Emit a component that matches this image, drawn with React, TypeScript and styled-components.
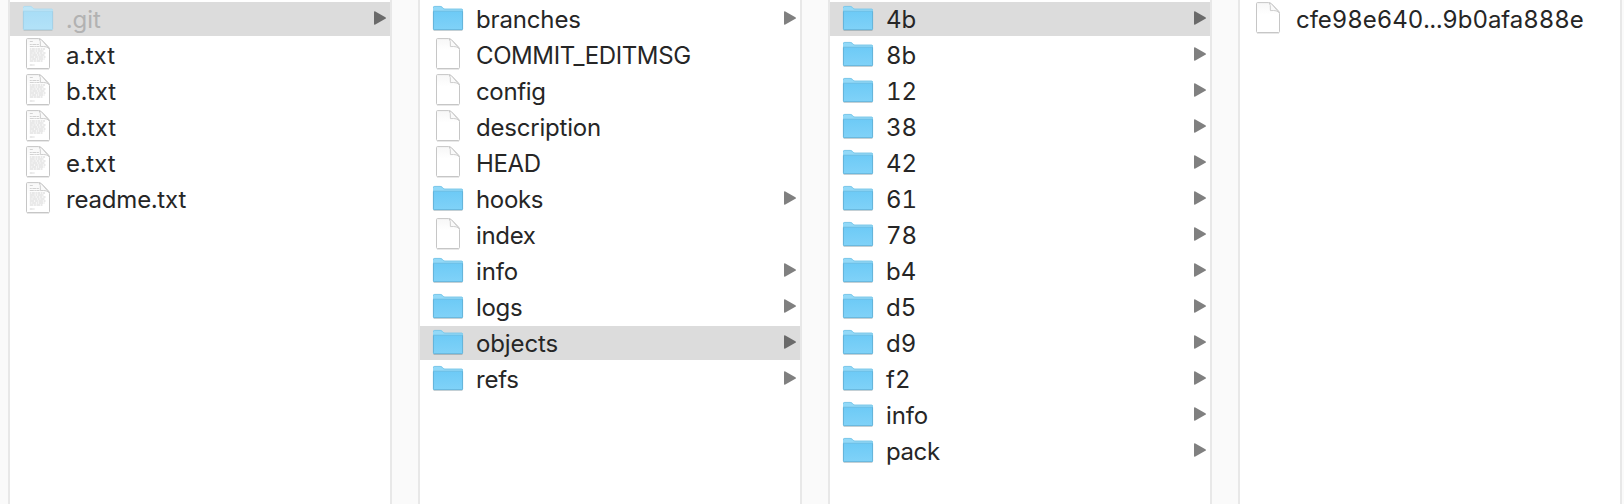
import React from "react";
import styled, { createGlobalStyle } from "styled-components";

const GlobalStyle = createGlobalStyle`
  html, body { margin: 0; padding: 0; background: #fafafa; overflow: hidden; }
  * { box-sizing: border-box; }
`;

const Browser = styled.main`
  display: flex;
  gap: 26px;
  width: 1624px;
  height: 504px;
  padding-left: 8px;
  overflow: hidden;
  background: #fafafa;
  font-family: Inter, "Liberation Sans", sans-serif;
  font-size: 24px;
  font-weight: 425;
  font-variant-numeric: tabular-nums;
  color: #262626;
`;

const Column = styled.ul`
  flex: 0 0 384px;
  height: 100%;
  margin: 0;
  padding: 2px 0 0;
  list-style: none;
  background: #fff;
  border: 2px solid #e8e8e8;
  border-width: 0 2px;
`;

const Row = styled.li<{ $selected?: boolean }>`
  display: flex;
  align-items: flex-start;
  height: 34px;
  margin-bottom: 2px;
  padding: 0 4px 0 12px;
  background: ${(p) => (p.$selected ? "#dcdcdc" : "transparent")};
`;

const Icon = styled.svg`
  flex: none;
  width: 32px;
  height: 34px;
`;

const Name = styled.span<{ $tracking: number; $dimmed?: boolean }>`
  flex: 1;
  padding-left: 12px;
  line-height: 36px;
  white-space: nowrap;
  letter-spacing: ${(p) => p.$tracking}px;
  color: ${(p) => (p.$dimmed ? "#b2b2b2" : "inherit")};
`;

const Arrow = styled.svg<{ $selected?: boolean }>`
  flex: none;
  width: 12px;
  height: 14px;
  margin-top: 9px;
  fill: ${(p) => (p.$selected ? "#6a6a6a" : "#808080")};
`;

type Kind = "folder" | "file" | "text";
interface Entry {
  name: string;
  kind: Kind;
  tracking?: number;
  selected?: boolean;
  dimmed?: boolean;
}

const columns: Entry[][] = [
  [
    { name: ".git", kind: "folder", selected: true, dimmed: true },
    { name: "a.txt", kind: "text", tracking: -0.05 },
    { name: "b.txt", kind: "text", tracking: -0.05 },
    { name: "d.txt", kind: "text", tracking: -0.05 },
    { name: "e.txt", kind: "text", tracking: -0.05 },
    { name: "readme.txt", kind: "text", tracking: -0.17 },
  ],
  [
    { name: "branches", kind: "folder", tracking: -0.15 },
    { name: "COMMIT_EDITMSG", kind: "file", tracking: -0.4 },
    { name: "config", kind: "file", tracking: -0.35 },
    { name: "description", kind: "file", tracking: -0.2 },
    { name: "HEAD", kind: "file", tracking: -0.35 },
    { name: "hooks", kind: "folder", tracking: -0.35 },
    { name: "index", kind: "file", tracking: -0.35 },
    { name: "info", kind: "folder", tracking: -0.15 },
    { name: "logs", kind: "folder", tracking: -0.3 },
    { name: "objects", kind: "folder", selected: true, tracking: -0.12 },
    { name: "refs", kind: "folder", tracking: -0.25 },
  ],
  [
    { name: "4b", kind: "folder", selected: true },
    ...["8b", "12", "38", "42", "61", "78", "b4", "d5", "d9", "f2"].map(
      (name): Entry => ({ name, kind: "folder" })
    ),
    { name: "info", kind: "folder", tracking: -0.15 },
    { name: "pack", kind: "folder", tracking: -0.4 },
  ],
  [{ name: "cfe98e640...9b0afa888e", kind: "file", tracking: -0.06 }],
];

// Baseline, right end and dash pattern of each line on a text document.
const textLines: [number, number, string][] = [
  [3.5, 11, "3 .5"],
  [6.5, 17, "2 .6 4 .5"],
  [8.5, 17.5, "4 .6 1.5 .5"],
  [11, 23, "1.5 .5 3 .6"],
  [13, 22, "5 .6 2 .5"],
  [15, 23.5, "3 .5 2.5 .7"],
  [17, 22.5, "2 .5 5 .5"],
  [19, 23.5, "4.5 .6 3 .5"],
  [21, 22.5, "1.8 .5 4 .6"],
  [23, 21, "3.6 .5 2 .5"],
  [27, 12.5, "3 .5"],
];

function FolderIcon({ dimmed }: { dimmed?: boolean }) {
  return (
    <Icon viewBox="0 0 32 34">
      {dimmed && (
        <path d="M1 5.5Q1 4 2.4 4H8.4Q9.4 4 10.2 4.8L11.4 6Q12 6.7 13 6.7H29.6Q31 6.7 31 8V28.1H1Z" fill="#f2f6f8" />
      )}
      <g opacity={dimmed ? 0.55 : 1}>
        <path d="M1.5 28.5H30.5" stroke="#000" strokeOpacity=".16" strokeWidth="1" />
        <path d="M1 5.5Q1 4 2.4 4H8.4Q9.4 4 10.2 4.8L11.4 6Q12 6.7 13 6.7H29.6Q31 6.7 31 8V12H1Z" fill="#92d9f8" />
        <path d="M1.4 5.8Q1.4 4.4 2.6 4.4H8.2Q9.2 4.4 10 5.2L11.2 6.4Q11.8 7.1 12.8 7.1H29.4Q30.6 7.1 30.6 8.2" fill="none" stroke="#79c3e4" strokeWidth=".8" />
        <path d="M1 9H31V26.9Q31 28.1 29.8 28.1H2.2Q1 28.1 1 26.9Z" fill="url(#folderFace)" />
        <path d="M1 9.2H31" stroke="#6dbbdf" strokeWidth=".8" />
        <path d="M1.4 9.5V26.7Q1.4 27.7 2.4 27.7H29.6Q30.6 27.7 30.6 26.7V9.5" fill="none" stroke="#5fabcf" strokeWidth=".8" />
      </g>
    </Icon>
  );
}

function FileIcon({ lines }: { lines?: boolean }) {
  return (
    <Icon viewBox="0 0 32 34">
      <path d="M5 31H27" stroke="#000" strokeOpacity=".18" strokeWidth="1" />
      <path d="M4.5 1.6Q4.5.6 5.5.6H16.5Q18.3.6 19.6 1.9L26.2 8.6Q27.5 9.9 27.5 11.6V29.6Q27.5 30.5 26.6 30.5H5.4Q4.5 30.5 4.5 29.6Z" fill="url(#paper)" stroke="#c6c6c6" />
      {lines &&
        textLines.map(([y, end, dash]) => (
          <path key={y} d={`M7.8 ${y}H${end}`} stroke="#c8c8c8" strokeWidth=".8" strokeDasharray={dash} />
        ))}
      <path d="M17.2.9Q18.7 2 18.4 8.6Q25.4 8 27.3 10.8L19.4 1.8Z" fill="#fafafa" stroke="#c8c8c8" strokeWidth=".9" strokeLinejoin="round" />
    </Icon>
  );
}

const Defs = styled.svg`
  display: block;
  width: 0;
  height: 0;
`;

function EntryRow({ entry }: { entry: Entry }) {
  const { name, kind, tracking = 0, selected, dimmed } = entry;
  return (
    <Row $selected={selected}>
      {kind === "folder" ? <FolderIcon dimmed={dimmed} /> : <FileIcon lines={kind === "text"} />}
      <Name $tracking={tracking} $dimmed={dimmed}>{name}</Name>
      {kind === "folder" && (
        <Arrow viewBox="0 0 12 14" $selected={selected}>
          <path d="M0 1.2Q0-.2 1.3.5L11.4 6.2Q12.6 7 11.4 7.8L1.3 13.5Q0 14.2 0 12.8Z" />
        </Arrow>
      )}
    </Row>
  );
}

export default function App() {
  return (
    <>
      <GlobalStyle />
      <Defs>
        <defs>
          <linearGradient id="folderFace" x1="0" y1="0" x2="0" y2="1">
            <stop offset="0" stopColor="#6dcaf6" />
            <stop offset="1" stopColor="#80d2f8" />
          </linearGradient>
          <linearGradient id="paper" x1="0" y1="0" x2="0" y2="1">
            <stop offset="0" stopColor="#f7f7f7" />
            <stop offset=".4" stopColor="#fff" />
          </linearGradient>
        </defs>
      </Defs>
      <Browser>
        {columns.map((entries, i) => (
          <Column key={i}>
            {entries.map((entry) => (
              <EntryRow key={entry.name} entry={entry} />
            ))}
          </Column>
        ))}
      </Browser>
    </>
  );
}
